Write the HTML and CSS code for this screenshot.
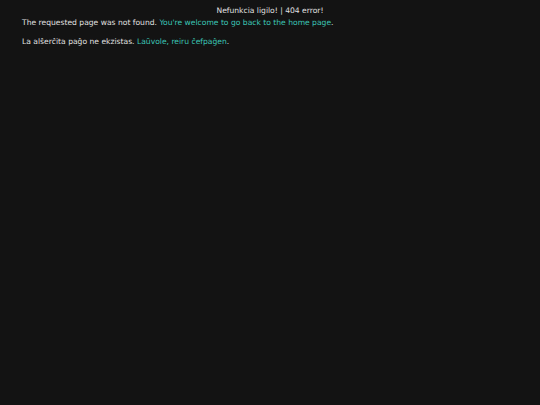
FILE: index.html
```
<!DOCTYPE html>
<html>
<head>
<meta charset="utf-8">
<link rel="stylesheet" href="styles.css">
</head>
<body>
<h1 class="title">Nefunkcia ligilo! | 404 error!</h1>
<main class="content">
<p class="line">The requested page was not found. <a class="link" href="#">You're welcome to go back to the home page</a>.</p>
<p class="line">La alŝerĉita paĝo ne ekzistas. <a class="link" href="#">Laŭvole, reiru ĉefpaĝen</a>.</p>
</main>
</body>
</html>
```
FILE: styles.css
```
html, body {
  margin: 0;
  padding: 0;
  background: #131313;
  color: #e0e0e0;
  font-family: "DejaVu Sans", sans-serif;
  font-size: 7.6px;
}
.title {
  margin: 0;
  padding-top: 6px;
  font-size: 7.6px;
  font-weight: normal;
  text-align: center;
  line-height: 10px;
}
.content {
  padding: 0 22px;
}
.line {
  margin: 2px 0 9px;
  line-height: 10px;
}
.link {
  color: #3cc6b6;
  text-decoration: none;
}
```
